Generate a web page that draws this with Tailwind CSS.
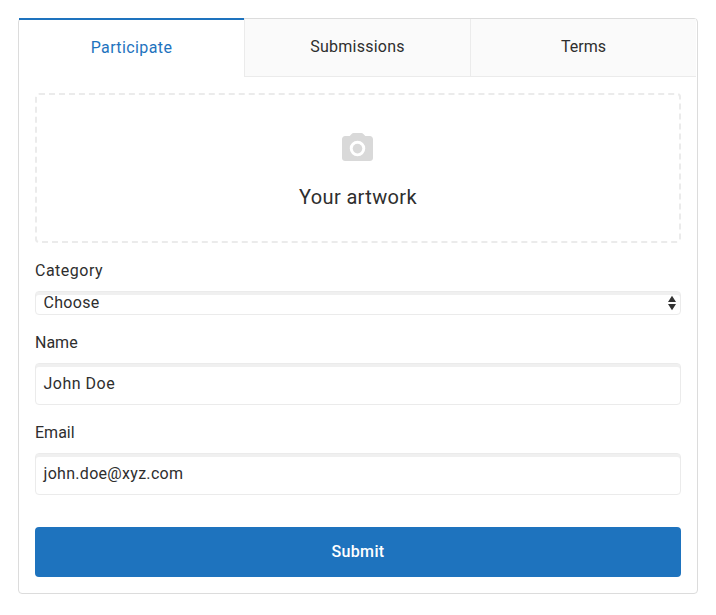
<!DOCTYPE html>
<html lang="en">
<head>
<meta charset="utf-8">
<title>Participate</title>
<script src="https://cdn.jsdelivr.net/npm/@tailwindcss/browser@4"></script>
</head>
<body class="bg-white p-[18px] font-['Roboto',sans-serif] text-base leading-6 text-[#2e2e2e]">
<main class="h-[576px] w-[680px] rounded border border-[#dcdcdc]">
  <nav class="flex h-[58px] pr-px text-center">
    <a class="-mt-px h-[59px] w-[225px] border-t-2 border-[#1e73be] pt-4 tracking-[0.4px] text-[#1e73be]">Participate</a>
    <a class="w-[226px] border-b border-l border-[#ebebeb] bg-[#fafafa] pt-4 tracking-[0.25px]">Submissions</a>
    <a class="w-[226px] border-b border-l border-[#ebebeb] bg-[#fafafa] pt-4 tracking-[0.05px]">Terms</a>
  </nav>
  <form class="flex flex-col px-4 pt-4">
    <div class="flex h-[150px] flex-col items-center rounded border-2 border-dashed border-[#ebebeb] pt-[38px]">
      <svg class="mr-px h-[28px] w-[31px]" viewBox="2 2 20 18" preserveAspectRatio="none" fill="#d9d9d9"><path fill-rule="evenodd" d="M9.5 2Q8.7 2 8.2 2.6L7 4H4c-1.1 0-2 .9-2 2v12c0 1.1.9 2 2 2h16c1.1 0 2-.9 2-2V6c0-1.1-.9-2-2-2h-3L15.800 2.600Q15.300 2 14.500 2zM12 17a5 5 0 1 1 0-10 5 5 0 0 1 0 10z"/><circle cx="12" cy="12" r="3.1"/></svg>
      <p class="mt-[21px] text-xl leading-[30px] tracking-[0.35px]">Your artwork</p>
    </div>
    <label class="mt-4 tracking-[0.5px]">Category</label>
    <div class="mt-2 flex h-6 items-start justify-between rounded border border-[#ebebeb] pl-[7.5px] pr-1 shadow-[inset_0_3px_0_#f0f0f0]">
      <span class="-mt-px tracking-[0.3px]">Choose</span>
      <svg class="mt-[3px] h-4 w-2" viewBox="0 0 8 16" fill="#333"><path d="M4 .7l4 6.300H0zM4 15.300l4-6.300H0z"/></svg>
    </div>
    <label class="mt-4">Name</label>
    <div class="mt-2 h-[42px] rounded border border-[#ebebeb] pl-[7.5px] pt-2 tracking-[0.5px] shadow-[inset_0_3px_0_#f0f0f0]">John Doe</div>
    <label class="mt-4">Email</label>
    <div class="mt-2 h-[42px] rounded border border-[#ebebeb] pl-[7.5px] pt-2 tracking-[0.3px] shadow-[inset_0_3px_0_#f0f0f0]">john.doe@xyz.com</div>
    <button type="button" class="mt-8 h-[50px] rounded bg-[#1e73be] pb-px font-medium tracking-[0.35px] text-white">Submit</button>
  </form>
</main>
</body>
</html>
